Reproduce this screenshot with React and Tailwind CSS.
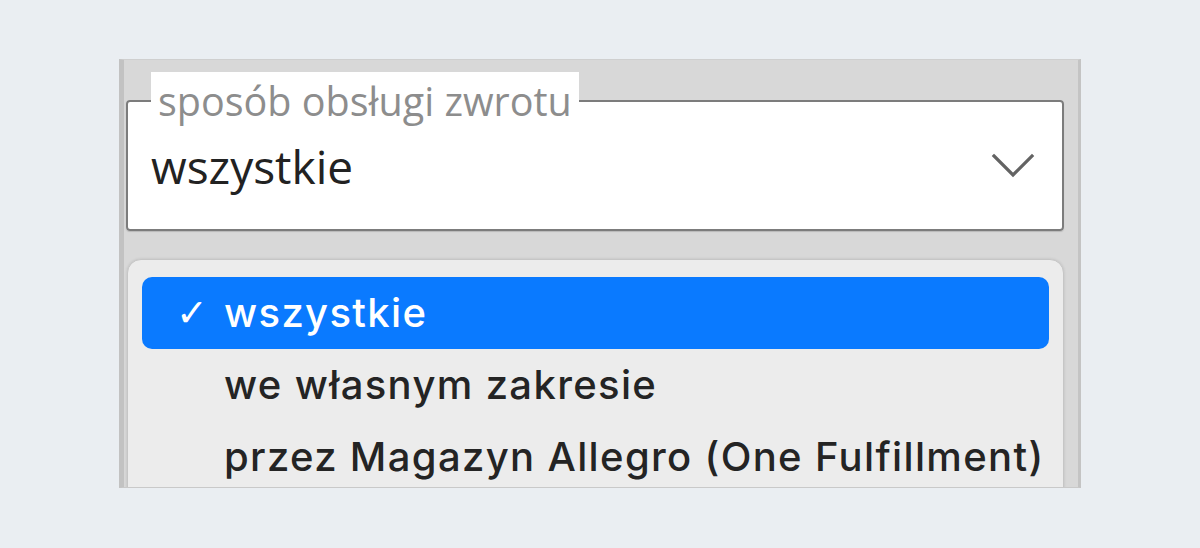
import React from 'react';

const options = [
  { label: 'wszystkie', selected: true },
  { label: 'we własnym zakresie' },
  { label: 'przez Magazyn Allegro (One Fulfillment)' },
];

function Chevron() {
  return (
    <svg width="44" height="26" viewBox="0 0 44 26" fill="none" className="shrink-0">
      <path d="M3 3 L22 22 L41 3" stroke="#636363" strokeWidth="3.2" strokeLinecap="square" />
    </svg>
  );
}

export default function App() {
  return (
    <div className="w-[1200px] h-[548px] bg-[#eaeef2] pt-[59px] pl-[119px]">
      <div className="w-[962px] h-[429px] bg-[#d8d8d8] border-l-[5px] border-r-[3px] border-t border-b border-l-[#c2c2c2] border-r-[#c4c4c4] border-t-[#cfcfcf] border-b-[#c9c9c9] overflow-hidden pt-[12px] pl-[2px]">
        {/* Select field */}
        <fieldset className="w-[938px] border-2 border-[#7c7c7c] rounded-[4px] bg-white pl-[23px] pr-[27px] pt-[6px] pb-[33px] shadow-[0_1px_1px_rgba(0,0,0,0.15)]">
          <legend className="bg-white px-[7px] text-[39.5px] leading-[58px] text-[#8d8d8d] font-['Open_Sans',sans-serif]">
            sposób obsługi zwrotu
          </legend>
          <div className="flex items-center justify-between h-[60px]">
            <span className="text-[46px] text-[#222] font-['Open_Sans',sans-serif] leading-[60px]">wszystkie</span>
            <Chevron />
          </div>
        </fieldset>

        {/* Open menu */}
        <div className="mt-[28px] ml-[1px] w-[937px] h-[300px] bg-[#ececec] border border-[#c6c6c6] rounded-[14px] pt-[17px] px-[14px] shadow-[0_0_3px_rgba(0,0,0,0.12)]">
          {options.map((opt) => (
            <div
              key={opt.label}
              className={`flex items-center h-[72px] rounded-[10px] ${opt.selected ? 'bg-[#0a7aff] text-white' : 'text-[#242424]'}`}
            >
              <span className="w-[82px] pl-[34px] text-[38px] leading-none font-['DejaVu_Sans',sans-serif] font-light">
                {opt.selected ? '✓' : ''}
              </span>
              <span className="text-[40px] font-['Inter',sans-serif] font-medium tracking-[1.35px]">{opt.label}</span>
            </div>
          ))}
        </div>
      </div>
    </div>
  );
}
